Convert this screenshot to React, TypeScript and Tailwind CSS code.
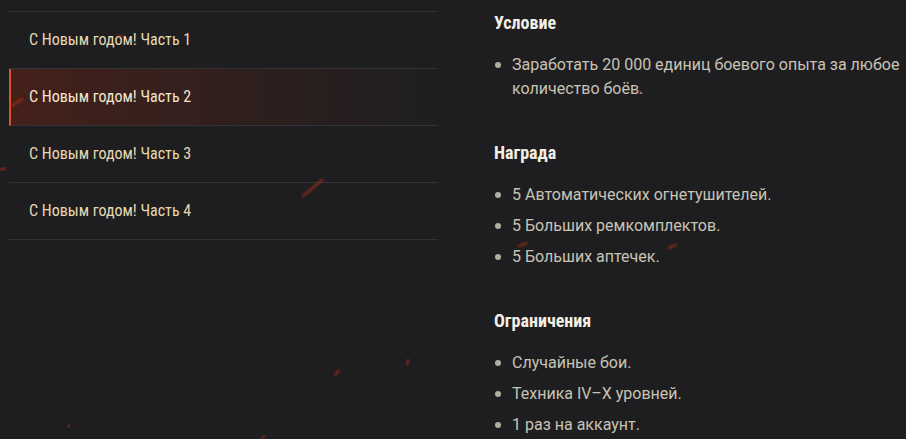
import React from "react";

const parts = ["С Новым годом! Часть 1", "С Новым годом! Часть 2", "С Новым годом! Часть 3", "С Новым годом! Часть 4"];

const sections = [
  { title: "Условие", items: ["Заработать 20 000 единиц боевого опыта за любое количество боёв."] },
  { title: "Награда", items: ["5 Автоматических огнетушителей.", "5 Больших ремкомплектов.", "5 Больших аптечек."] },
  { title: "Ограничения", items: ["Случайные бои.", "Техника IV–X уровней.", "1 раз на аккаунт."] },
];

// little embers floating over the page
const sparks = [
  { x: 12, y: 106, len: 12, a: -35 },
  { x: 118, y: 37, len: 4, a: -30 },
  { x: 303, y: 196, len: 25, a: -40 },
  { x: 421, y: 210, len: 2, a: 0 },
  { x: 335, y: 375, len: 6, a: -50 },
  { x: 407, y: 364, len: 4, a: -70 },
  { x: 519, y: 246, len: 8, a: -20 },
  { x: 669, y: 248, len: 8, a: -25 },
  { x: 638, y: 93, len: 3, a: -30 },
  { x: 0, y: 170, len: 5, a: -20 },
  { x: 68, y: 427, len: 2, a: -60 },
  { x: 262, y: 438, len: 3, a: -30 },
];

const condensed = "font-['Roboto_Condensed','Liberation_Sans_Narrow',sans-serif]";

export default function App() {
  return (
    <div className="relative h-[439px] w-[906px] overflow-hidden bg-[#1e1e20] font-['Roboto',sans-serif]">
      <div className="relative flex">
        <ul className="ml-[9px] mt-[11px] w-[429px] border-t border-[#333335]">
          {parts.map((p, i) => (
            <li
              key={p}
              className={`flex h-[57px] items-center border-b border-[#333335] ${condensed} text-[16px] ${
                i === 1
                  ? "border-l-2 border-l-[#d4552a] bg-gradient-to-r from-[#45201a] via-[#2c1f1e] via-60% to-[#1e1e20] pl-[18px] text-[#f3e6cf]"
                  : "pl-[20px] text-[#e6d9b2]"
              }`}
            >
              {p}
            </li>
          ))}
        </ul>
        <div className="ml-[56px] mt-[12px] w-[410px]">
          {sections.map((s) => (
            <div key={s.title} className="mb-[41px]">
              <h3 className={`${condensed} text-[18px] font-bold leading-[22px] text-[#f4efe4]`}>{s.title}</h3>
              <ul className="mt-[19px] flex flex-col gap-[7px]">
                {s.items.map((it) => (
                  <li key={it} className="relative pl-[18px] text-[16px] leading-[24px] text-[#c8c3b5]">
                    <span className="absolute left-[1px] top-[9px] h-[6px] w-[6px] rounded-full bg-[#b3ae9f]" />
                    {it}
                  </li>
                ))}
              </ul>
            </div>
          ))}
        </div>
      </div>
      <svg className="pointer-events-none absolute inset-0" width="906" height="439">
        <defs>
          <filter id="glow" x="-50%" y="-50%" width="200%" height="200%">
            <feGaussianBlur stdDeviation="1" />
          </filter>
        </defs>
        {sparks.map((s, i) => (
          <line
            key={i}
            x1={s.x}
            y1={s.y}
            x2={s.x + s.len * Math.cos((s.a * Math.PI) / 180)}
            y2={s.y + s.len * Math.sin((s.a * Math.PI) / 180)}
            stroke="#b8321c"
            strokeWidth="2.5"
            strokeLinecap="round"
            opacity="0.6"
            filter="url(#glow)"
          />
        ))}
      </svg>
    </div>
  );
}
